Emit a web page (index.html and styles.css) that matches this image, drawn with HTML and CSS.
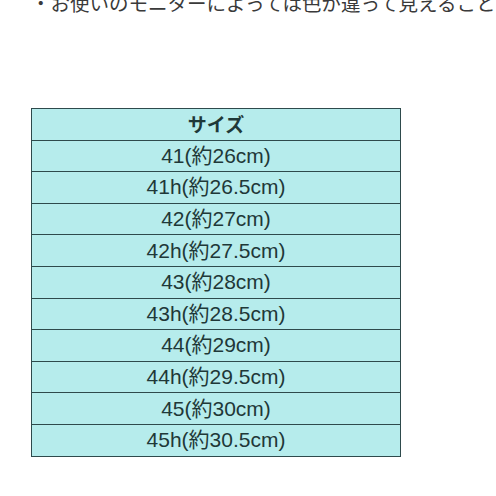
FILE: index.html
```html
<!DOCTYPE html>
<html lang="ja">
<head>
<meta charset="utf-8">
<link rel="stylesheet" href="styles.css">
</head>
<body>
<p class="note">・お使いのモニターによっては色が違って見えることがあります。</p>
<table class="sizes">
<tr><th>サイズ</th></tr>
<tr><td>41(約26cm)</td></tr>
<tr><td>41h(約26.5cm)</td></tr>
<tr><td>42(約27cm)</td></tr>
<tr><td>42h(約27.5cm)</td></tr>
<tr><td>43(約28cm)</td></tr>
<tr><td>43h(約28.5cm)</td></tr>
<tr><td>44(約29cm)</td></tr>
<tr><td>44h(約29.5cm)</td></tr>
<tr><td>45(約30cm)</td></tr>
<tr><td>45h(約30.5cm)</td></tr>
</table>
</body>
</html>
```
FILE: styles.css
```css
html, body {
  margin: 0;
  padding: 0;
  background: #fff;
  overflow: hidden;
}
body {
  width: 496px;
  height: 496px;
  font-family: "Noto Sans CJK JP", "Noto Sans", sans-serif;
}
.note {
  margin: -9px 0 0 31px;
  white-space: nowrap;
  font-size: 19.5px;
  line-height: 24px;
  color: #3a3a3a;
}
.sizes {
  margin: 93px 0 0 31px;
  width: 370px;
  border-collapse: collapse;
  background: #b6ecec;
  color: #1f3838;
  font-family: "Liberation Sans", "Noto Sans CJK JP", sans-serif;
  font-size: 21px;
}
.sizes tr {
  height: 31.6px;
}
.sizes th, .sizes td {
  border: 1.5px solid #2e4a4c;
  padding: 0;
  text-align: center;
  line-height: 22px;
}
.sizes th {
  font-family: "Noto Sans CJK JP", sans-serif;
  font-size: 19px;
  font-weight: 700;
}
.sizes td {
  font-weight: 400;
}
```
